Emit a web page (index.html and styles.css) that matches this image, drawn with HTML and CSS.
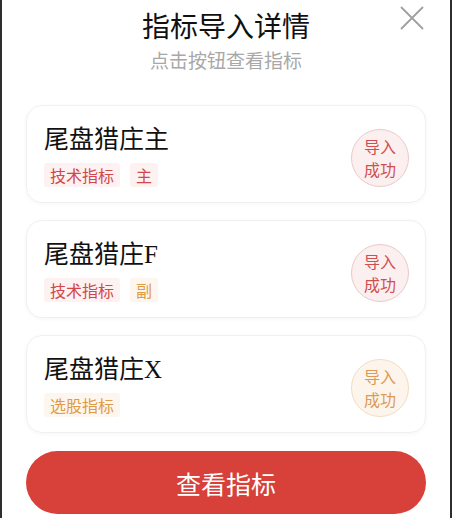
FILE: index.html
```html
<!DOCTYPE html>
<html lang="zh-CN">
<head>
  <meta charset="UTF-8">
  <title>指标导入详情</title>
  <link rel="stylesheet" href="styles.css">
</head>
<body>

  <div class="sheet">
    <div class="sheet-header">
      <h1>指标导入详情</h1>
      <p class="subtitle">点击按钮查看指标</p>
      <button class="close-btn" aria-label="关闭">
        <svg width="24" height="24" viewBox="0 0 24 24">
          <path d="M1 1 L23 23 M23 1 L1 23" stroke="#a0a0a0" stroke-width="1.8" fill="none"/>
        </svg>
      </button>
    </div>

    <div class="card-list">
      <div class="card">
        <div class="card-info">
          <div class="card-title">尾盘猎庄主</div>
          <div class="tags">
            <span class="tag tag-red">技术指标</span>
            <span class="tag tag-red">主</span>
          </div>
        </div>
        <div class="status status-red">导入<br>成功</div>
      </div>

      <div class="card">
        <div class="card-info">
          <div class="card-title">尾盘猎庄F</div>
          <div class="tags">
            <span class="tag tag-red">技术指标</span>
            <span class="tag tag-orange">副</span>
          </div>
        </div>
        <div class="status status-red">导入<br>成功</div>
      </div>

      <div class="card">
        <div class="card-info">
          <div class="card-title">尾盘猎庄X</div>
          <div class="tags">
            <span class="tag tag-orange">选股指标</span>
          </div>
        </div>
        <div class="status status-orange">导入<br>成功</div>
      </div>
    </div>

    <button class="view-btn">查看指标</button>
  </div>

</body>
</html>
```

FILE: styles.css
```css
* {
  box-sizing: border-box;
}

body {
  margin: 0;
  padding: 0;
  background: #2e2e2e;
  font-family: "Noto Sans CJK SC", sans-serif;
}

.sheet {
  margin: 0 2px;
  height: 518px;
  background: white;
  padding: 0 24px;
  overflow: hidden;
}

.sheet-header {
  position: relative;
  text-align: center;
  padding-top: 5px;
}

h1 {
  margin: 0;
  font-size: 28px;
  line-height: 40px;
  font-weight: normal;
  color: #111;
}

.subtitle {
  margin: 2px 0 0;
  font-size: 19px;
  line-height: 26px;
  color: #a8a8a8;
}

.close-btn {
  position: absolute;
  top: 6px;
  right: 2px;
  padding: 0;
  border: none;
  background: none;
  cursor: pointer;
}

.card-list {
  margin-top: 32px;
  display: flex;
  flex-direction: column;
  gap: 17px;
}

.card {
  height: 98px;
  border: 1px solid #f0f0f0;
  border-radius: 16px;
  box-shadow: 0 1px 4px rgba(0, 0, 0, 0.04);
  padding: 0 16px 15px 17px;
  display: flex;
  justify-content: space-between;
  align-items: flex-end;
}

.card-title {
  font-family: "Liberation Serif", "Noto Sans CJK SC", serif;
  font-size: 25px;
  line-height: 34px;
  color: #111;
}

.tags {
  margin-top: 6px;
  display: flex;
  gap: 10px;
}

.tag {
  font-size: 16px;
  line-height: 24px;
  padding: 0 6px;
  border-radius: 3px;
}

.tag-red {
  color: #d2474a;
  background: #fdf1f1;
}

.tag-orange {
  color: #e09a45;
  background: #fdf6ee;
}

.status {
  width: 58px;
  height: 58px;
  border-radius: 50%;
  font-size: 16px;
  line-height: 23px;
  text-align: center;
  padding-top: 5px;
}

.status-red {
  color: #cf4f50;
  background: #fcefef;
  border: 1px solid #eac9c9;
}

.status-orange {
  color: #dc9a55;
  background: #fdf5ec;
  border: 1px solid #f0dcc4;
}

.view-btn {
  display: block;
  width: 100%;
  height: 63px;
  margin-top: 18px;
  border: none;
  border-radius: 32px;
  background: #d8403a;
  color: white;
  font-family: "Noto Sans CJK SC", sans-serif;
  font-size: 25px;
  cursor: pointer;
}
```
